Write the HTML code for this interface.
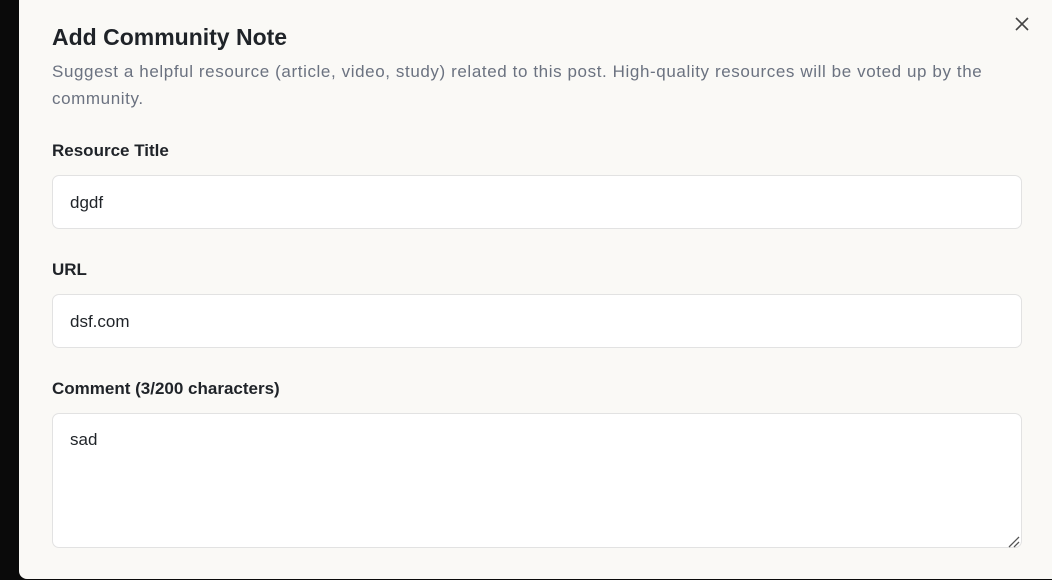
<!DOCTYPE html><html><head><style>
body{margin:0;width:1052px;height:580px;background:#0a0a0a;overflow:hidden;font-family:"Liberation Sans",sans-serif}
.p{position:absolute;left:19px;top:-10px;width:1045px;height:589px;background:#faf9f6;border-radius:8px}
.a{position:absolute}
h1{position:absolute;left:52px;top:24px;margin:0;font-size:23px;font-weight:600;color:#1f2328}
.d{left:52px;top:58px;width:950px;font-size:17px;letter-spacing:0.6px;line-height:27px;color:#6b7280}
.l{left:52px;font-size:17px;font-weight:600;color:#1f2328}
.i{left:52px;width:970px;background:#fff;border:1px solid #e2e2e2;border-radius:7px;box-sizing:border-box;font-size:17px;color:#1f2328;padding-left:17px}
</style></head><body>
<div class="p"></div>
<h1>Add Community Note</h1>
<div class="a" style="left:1015px;top:17px"><svg width="14" height="14"><path d="M1 1L13 13M13 1L1 13" stroke="#444" stroke-width="1.6"/></svg></div>
<div class="a d">Suggest a helpful resource (article, video, study) related to this post. High-quality resources will be voted up by the community.</div>
<div class="a l" style="top:141px">Resource Title</div>
<div class="a i" style="top:175px;height:54px;line-height:54px">dgdf</div>
<div class="a l" style="top:260px">URL</div>
<div class="a i" style="top:294px;height:54px;line-height:54px">dsf.com</div>
<div class="a l" style="top:379px">Comment (3/200 characters)</div>
<div class="a i" style="top:413px;height:135px;padding-top:16px">sad</div>
<div class="a" style="left:1008px;top:535px"><svg width="12" height="12"><path d="M1 11L11 1M6 11L11 6" stroke="#555" stroke-width="1.3"/></svg></div>
</body></html>
